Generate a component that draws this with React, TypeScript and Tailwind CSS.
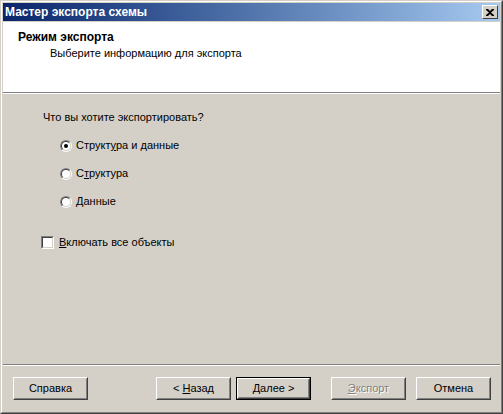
import React from "react";

const FONT = { fontFamily: '"Liberation Sans", Arial, sans-serif' };

function Radio({ checked, label }: { checked?: boolean; label: React.ReactNode }) {
  return (
    <div className="flex h-[13px] items-center gap-[4px]">
      <span className="relative flex h-[12px] w-[12px] items-center justify-center rounded-full border border-t-[#808080] border-l-[#808080] border-b-white border-r-white">
        <span className="flex h-[10px] w-[10px] items-center justify-center rounded-full border border-t-[#404040] border-l-[#404040] border-b-[#d4d0c8] border-r-[#d4d0c8] bg-white">
          {checked && <span className="h-[4px] w-[4px] rounded-full bg-black" />}
        </span>
      </span>
      <span>{label}</span>
    </div>
  );
}

function Button({
  children,
  isDefault,
  disabled,
}: {
  children: React.ReactNode;
  isDefault?: boolean;
  disabled?: boolean;
}) {
  const inner = (
    <div
      className={
        "flex h-full w-full items-center justify-center border border-t-white border-l-white border-b-[#404040] border-r-[#404040] " +
        (disabled ? "text-[#808080]" : "text-black")
      }
    >
      <div className="flex h-full w-full items-center justify-center border border-transparent border-b-[#808080] border-r-[#808080]">
        <span className={disabled ? "[text-shadow:1px_1px_0_#ffffff]" : ""}>{children}</span>
      </div>
    </div>
  );
  return (
    <div
      className={
        "h-[23px] w-[75px] bg-[#d4d0c8] " + (isDefault ? "border border-black" : "")
      }
    >
      {inner}
    </div>
  );
}

export default function App() {
  return (
    <div
      className="h-[414px] w-[503px] border border-t-[#d4d0c8] border-l-[#d4d0c8] border-b-[#404040] border-r-[#404040] bg-[#d4d0c8] text-[11px] text-black"
      style={FONT}
    >
      <div className="flex h-full w-full flex-col border border-t-white border-l-white border-b-[#808080] border-r-[#808080] p-px">
        {/* title bar */}
        <div className="flex h-[18px] shrink-0 items-center justify-between bg-gradient-to-r from-[#0a246a] to-[#a6caf0] pl-[2px] pr-[2px]">
          <span className="text-[12px] font-bold text-white">Мастер экспорта схемы</span>
          <div className="flex h-[14px] w-[16px] items-center justify-center border border-t-white border-l-white border-b-[#404040] border-r-[#404040] bg-[#d4d0c8]">
            <svg width="8" height="7" viewBox="0 0 8 7">
              <path d="M0 0h2l2 2 2-2h2v1L5 3.5 8 6v1H6L4 5 2 7H0V6l3-2.5L0 1z" fill="#000" />
            </svg>
          </div>
        </div>
        <div className="h-px shrink-0" />

        {/* header */}
        <div className="flex h-[70px] shrink-0 flex-col bg-white pl-[15px] pt-[8px]">
          <span className="text-[12px] font-bold leading-[14px]">Режим экспорта</span>
          <span className="mt-[2px] pl-[32px] leading-[14px]">Выберите информацию для экспорта</span>
        </div>
        <div className="h-px shrink-0 bg-[#808080]" />
        <div className="h-px shrink-0 bg-white" />

        {/* content */}
        <div className="flex flex-1 flex-col pl-[40px] pt-[16px]">
          <span className="leading-[14px]">Что вы хотите экспортировать?</span>
          <div className="mt-[15px] flex flex-col gap-[15px] pl-[17px]">
            <Radio
              checked
              label={
                <>
                  Структ<u>у</u>ра и данные
                </>
              }
            />
            <Radio
              label={
                <>
                  С<u>т</u>руктура
                </>
              }
            />
            <Radio
              label={
                <>
                  <u>Д</u>анные
                </>
              }
            />
          </div>
          <div className="mt-[26px] flex items-center gap-[5px]">
            <span className="-ml-[2px] h-[13px] w-[13px] border border-t-[#808080] border-l-[#808080] border-b-white border-r-white">
              <span className="block h-full w-full border border-t-[#404040] border-l-[#404040] border-b-[#d4d0c8] border-r-[#d4d0c8] bg-white" />
            </span>
            <span>
              <u>В</u>ключать все объекты
            </span>
          </div>
        </div>

        {/* bottom separator */}
        <div className="h-px shrink-0 bg-[#808080]" />
        <div className="h-px shrink-0 bg-white" />

        {/* buttons */}
        <div className="flex h-[45px] shrink-0 items-start pl-[10px] pt-[11px]">
          <Button>Справка</Button>
          <div className="ml-[68px] flex gap-[5px]">
            <Button>
              &lt; <u>Н</u>азад
            </Button>
            <Button isDefault>
              <u>Д</u>алее &gt;
            </Button>
          </div>
          <div className="ml-[20px]">
            <Button disabled>
              <u>Э</u>кспорт
            </Button>
          </div>
          <div className="ml-[10px]">
            <Button>Отмена</Button>
          </div>
        </div>
      </div>
    </div>
  );
}
